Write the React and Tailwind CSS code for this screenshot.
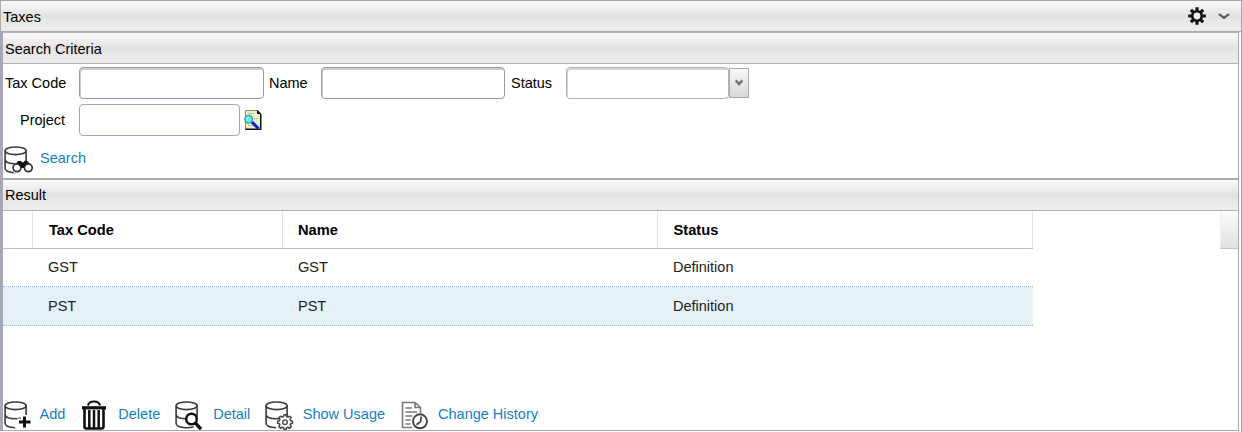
import React from "react";

const BAR =
  "flex items-center bg-[linear-gradient(#f8f8f8,#f0eff0_25%,#e3e1e2_50%,#e9e8e9_65%,#ededed)]";

function Database() {
  return (
    <g fill="none" stroke="#3a3a3a" strokeWidth="1.600">
      <ellipse cx="11.600" cy="5.800" rx="10.500" ry="3.800" />
      <path d="M1.100 5.800v17.500c0 2.600 4 4.200 10 4.400M22.100 5.800v11M1.100 14.300c0 2.800 4.500 4.400 10.500 4.400 4.500 0 8-.8 10-2.500" />
    </g>
  );
}

function Icon({ children }) {
  return (
    <svg width="30" height="30" viewBox="0 0 30 30" className="shrink-0">
      {children}
    </svg>
  );
}

function SearchIcon() {
  return (
    <Icon>
      <Database />
      <path d="M8 22l5-6h12l4 6-2 6H10z" fill="#fff" />
      <path d="M10.500 20.500l3.500-4.500h3l1 1.200h1.500l1-1.200h3l3.500 4.500-2 2.500h-12z" fill="#111" />
      <g fill="#fff" stroke="#333" strokeWidth="1.700">
        <circle cx="13" cy="22.800" r="3.900" />
        <circle cx="24.300" cy="22.800" r="3.900" />
      </g>
      <path d="M14 18.200h9l-1.800 3h-5.400z" fill="#111" />
    </Icon>
  );
}

function AddIcon() {
  return (
    <Icon>
      <Database />
      <path d="M20.500 15v13M13 22h14" stroke="#fff" strokeWidth="7" />
      <path d="M20.500 16.500v11M15 22h11.500" stroke="#111" strokeWidth="3" />
    </Icon>
  );
}

function TrashIcon() {
  return (
    <Icon>
      <g fill="none" stroke="#111" strokeWidth="2">
        <path d="M9 5.500c1-5.500 11-5.500 12 0" />
        <path d="M3 7.800h24" strokeWidth="3.200" />
        <path d="M5.500 9v17.500q0 2 2 2h15q2 0 2-2V9" strokeWidth="2.600" />
        <path d="M10.300 10v18M15 10v18M19.700 10v18" strokeWidth="2.500" />
      </g>
    </Icon>
  );
}

function DetailIcon() {
  return (
    <Icon>
      <Database />
      <path d="M10 27.700c3.500.2 6 0 8.500-1" stroke="#3a3a3a" strokeWidth="1.500" fill="none" />
      <circle cx="16.500" cy="19" r="5.300" fill="#fff" stroke="#111" strokeWidth="2.500" />
      <path d="M20.500 23.200l5.500 6" stroke="#111" strokeWidth="3.400" />
    </Icon>
  );
}

function UsageIcon() {
  return (
    <Icon>
      <Database />
      <path
        d="M18.300 14.800h2.400l.5 2 1.500.6 1.900-1.100 1.700 1.700-1.100 1.900.6 1.500 2 .5v2.200l-2 .5-.6 1.500 1.100 1.900-1.700 1.700-1.900-1.100-1.500.6-.5 2h-2.400l-.5-2-1.500-.6-1.900 1.100-1.700-1.700 1.100-1.900-.6-1.500-2-.5v-2.200l2-.5.6-1.500-1.100-1.900 1.700-1.700 1.900 1.100 1.500-.6z"
        fill="#fff"
        stroke="#444"
        strokeWidth="1.700"
        strokeLinejoin="round"
        transform="translate(2.500 1.500) scale(.9)"
      />
      <circle cx="20" cy="22.200" r="2.300" fill="#fff" stroke="#555" strokeWidth="1.500" />
    </Icon>
  );
}

function HistoryIcon() {
  return (
    <Icon>
      <g fill="none" stroke="#777" strokeWidth="1.600">
        <path d="M11 27.500H1.500V2.500h12.500l5.500 5V14M14 2.500v5h5.500" />
        <path d="M4.500 8h6.500M4.500 12h11.500M4.500 16h7M4.500 20h5M4.500 24h5" />
      </g>
      <circle cx="19" cy="21.300" r="8.600" fill="#fff" />
      <circle cx="19" cy="21.300" r="7" fill="#fff" stroke="#444" strokeWidth="1.900" />
      <path d="M20.300 16.500L19.500 21.800l-4 3" fill="none" stroke="#444" strokeWidth="1.700" />
    </Icon>
  );
}

function LookupIcon() {
  return (
    <svg width="18" height="20" viewBox="0 0 18 20">
      <path d="M1.500.5h12l3 3V19.500h-15z" fill="#ededc6" stroke="#8f8f70" />
      <path d="M13 0v4h3v14.500H1.500V20h16V4L14 .5z" fill="#111" />
      <path d="M4 3.500h6M4 15.500h5M10 8.500h4" stroke="#bcbc96" />
      <path d="M8 12.200l6.500 6.300" stroke="#0b1fd4" strokeWidth="3" />
      <circle cx="4.600" cy="9.300" r="4" fill="#5ceaf0" stroke="#2a8088" />
      <path d="M3 8.500l2-1.500" stroke="#fff" />
    </svg>
  );
}

function GearIcon() {
  return (
    <svg width="18" height="18" viewBox="0 0 18 18" className="shrink-0">
      <g stroke="#111" strokeWidth="3.200">
        <path d="M9 .2v17.600M.2 9h17.600M2.900 2.900l12.200 12.200M15.100 2.900L2.900 15.100" />
      </g>
      <circle cx="9" cy="9" r="6.100" fill="#111" />
      <circle cx="9" cy="9" r="3.400" fill="#eee" />
    </svg>
  );
}

const FIELD = "h-8 rounded-[4px] border bg-white outline-none";
const INSET = "border-[#98989d] shadow-[inset_1px_2px_0_#cdcdcd]";

function Action({ icon, label, className }) {
  return (
    <button className={`flex items-center text-[#157fc4] ${className}`}>
      {icon}
      <span className="-mt-1">{label}</span>
    </button>
  );
}

function Row({ name, className }) {
  return (
    <div className={`grid w-[1030px] grid-cols-[30px_250px_375px_375px] items-center border-b border-dotted border-[#8fb2e4] text-[#222] ${className}`}>
      <span />
      <span className="pl-[15px]">{name}</span>
      <span className="pl-[15px]">{name}</span>
      <span className="pl-[15px]">Definition</span>
    </div>
  );
}

export default function App() {
  return (
    <main className="flex h-[432px] w-[1242px] flex-col overflow-hidden border-t border-r border-[#a3a6ad] bg-white font-['Liberation_Sans',Arial,sans-serif] text-[14.500px] leading-5 text-black">
      <header className={`${BAR} h-[31px] shrink-0 justify-between border-b border-l border-[#aaabb0] pr-[11px] pl-[2px]`}>
        <h1 className="pt-[2px]">Taxes</h1>
        <div className="flex items-center gap-3">
          <GearIcon />
          <svg width="12" height="7" viewBox="0 0 12 7">
            <path d="M1 1.200l5 3.600 5-3.600" fill="none" stroke="#555" strokeWidth="2.200" />
          </svg>
        </div>
      </header>
      <div className="mr-[2px] mb-px flex flex-1 flex-col border-r border-b border-l-[3px] border-[#a3a8b4]">
        <section className="flex h-[148px] shrink-0 flex-col border-b-2 border-[#a9a9ae]">
          <h2 className={`${BAR} h-8 shrink-0 border-t border-b border-[#b2b2b5] pt-px pl-[2px]`}>Search Criteria</h2>
          <form className="flex flex-col">
            <div className="mt-[3px] flex h-8 items-center">
              <label htmlFor="code" className="w-[76px] pl-[2px]">Tax Code</label>
              <input id="code" className={`${FIELD} ${INSET} w-[185px]`} />
              <label htmlFor="name" className="w-[57px] pl-[5px]">Name</label>
              <input id="name" className={`${FIELD} ${INSET} w-[184px]`} />
              <label htmlFor="status" className="w-[61px] pl-[6px]">Status</label>
              <input id="status" className={`${FIELD} w-[163px] border-[#b1b1b6] shadow-[inset_1px_2px_0_#d5d5d5]`} />
              <button type="button" className="flex h-[30px] w-5 items-center justify-center border border-[#a9a9ae] bg-linear-to-b from-[#f8f8f8] to-[#d8d8d8]">
                <svg width="8" height="8" viewBox="0 0 8 8">
                  <path d="M.7 1.300L4 5l3.300-3.700" fill="none" stroke="#757575" strokeWidth="2.600" />
                </svg>
              </button>
            </div>
            <div className="mt-[5px] flex h-8 items-center">
              <label htmlFor="project" className="w-[76px] pl-[17px]">Project</label>
              <input id="project" className={`${FIELD} mr-1 w-[161px] border-[#a5a6b5]`} />
              <LookupIcon />
            </div>
            <Action icon={<SearchIcon />} label="Search" className="mt-[9px] ml-[1px] gap-[6px] self-start" />
          </form>
        </section>
        <section className="flex flex-1 flex-col">
          <h2 className={`${BAR} h-[31px] shrink-0 border-b border-[#b2b2b5] pl-[2px]`}>Result</h2>
          <div className="flex h-[38px] justify-between">
            <div className="grid w-[1030px] grid-cols-[30px_250px_375px_375px] border-b border-[#b7c0cf] pt-px text-[14.670px] leading-9 font-bold">
              <span className="-mt-px border-r border-[#e1e1e1]" />
              <span className="-mt-px border-r border-[#e1e1e1] pt-px pl-4">Tax Code</span>
              <span className="-mt-px border-r border-[#e1e1e1] pt-px pl-[15px]">Name</span>
              <span className="-mt-px border-r border-[#e1e1e1] pt-px pl-[15.500px]">Status</span>
            </div>
            <div className="w-[18px] border-b border-l border-b-[#bfc3cb] border-l-[#eee] bg-linear-to-b from-[#fcfcfc] to-[#e0e0e0]" />
          </div>
          <Row name="GST" className="h-[38px] pb-px" />
          <Row name="PST" className="h-[39px] bg-[#e5f0f7]" />
          <nav className="mt-auto flex items-end [&_span]:-mt-0.5">
            <Action icon={<AddIcon />} label="Add" className="ml-[1px] gap-[5.500px]" />
            <Action icon={<TrashIcon />} label="Delete" className="ml-[14px] gap-[9px]" />
            <Action icon={<DetailIcon />} label="Detail" className="ml-[15px] gap-[8px]" />
            <Action icon={<UsageIcon />} label="Show Usage" className="ml-[15px] gap-[7.500px]" />
            <Action icon={<HistoryIcon />} label="Change History" className="ml-[15.500px] gap-[7.500px]" />
          </nav>
        </section>
      </div>
    </main>
  );
}
